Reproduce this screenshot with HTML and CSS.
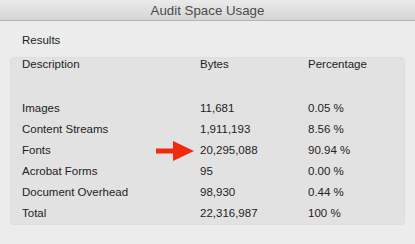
FILE: index.html
```html
<!DOCTYPE html>
<html lang="en">
<head>
    <meta charset="UTF-8">
    <title>Audit Space Usage</title>
    <link rel="stylesheet" href="styles.css">
</head>
<body>
    <div class="window">
        <!-- Title Bar -->
        <div class="title-bar">Audit Space Usage</div>

        <div class="content">
            <div class="group-label">Results</div>

            <div class="results">
                <div class="row header">
                    <span>Description</span>
                    <span>Bytes</span>
                    <span>Percentage</span>
                </div>
                <div class="row">
                    <span>Images</span>
                    <span>11,681</span>
                    <span>0.05 %</span>
                </div>
                <div class="row">
                    <span>Content Streams</span>
                    <span>1,911,193</span>
                    <span>8.56 %</span>
                </div>
                <div class="row highlight">
                    <span>Fonts</span>
                    <span>20,295,088</span>
                    <span>90.94 %</span>
                    <svg class="pointer" viewBox="0 0 38 20">
                        <rect x="0" y="7.5" width="20" height="5" fill="#f2290b"/>
                        <path d="M17 0 L38 10 L17 20 Z" fill="#f2290b"/>
                    </svg>
                </div>
                <div class="row">
                    <span>Acrobat Forms</span>
                    <span>95</span>
                    <span>0.00 %</span>
                </div>
                <div class="row">
                    <span>Document Overhead</span>
                    <span>98,930</span>
                    <span>0.44 %</span>
                </div>
                <div class="row">
                    <span>Total</span>
                    <span>22,316,987</span>
                    <span>100 %</span>
                </div>
            </div>
        </div>
    </div>
</body>
</html>
```

FILE: styles.css
```css
* {
    margin: 0;
    padding: 0;
    box-sizing: border-box;
}

body {
    background: #ececec;
    color: #222;
    font-family: "Liberation Sans", Arial, sans-serif;
    font-size: 11.5px;
}

.window {
    width: 415px;
    height: 244px;
    overflow: hidden;
}

/* Title Bar */
.title-bar {
    height: 21px;
    line-height: 22px;
    text-align: center;
    font-size: 13.3px;
    color: #4b4b4b;
    background: linear-gradient(#ebebeb, #d5d5d5);
    border-bottom: 1px solid #b5b5b5;
}

.content {
    padding: 13px 10px 0 10px;
}

.group-label {
    padding-left: 12px;
    line-height: 13px;
    margin-bottom: 10px;
}

/* Results Table */
.results {
    width: 395px;
    background: #e2e2e2;
    border: 1px solid #dedede;
    border-radius: 4px;
    padding: 0 11px 0 11px;
}

.row {
    display: grid;
    grid-template-columns: 178px 108px 1fr;
    line-height: 21px;
    position: relative;
}

.row.header {
    line-height: 13px;
    margin-bottom: 27px;
}

.pointer {
    position: absolute;
    left: 134px;
    top: 1px;
    width: 38px;
    height: 20px;
}
```
